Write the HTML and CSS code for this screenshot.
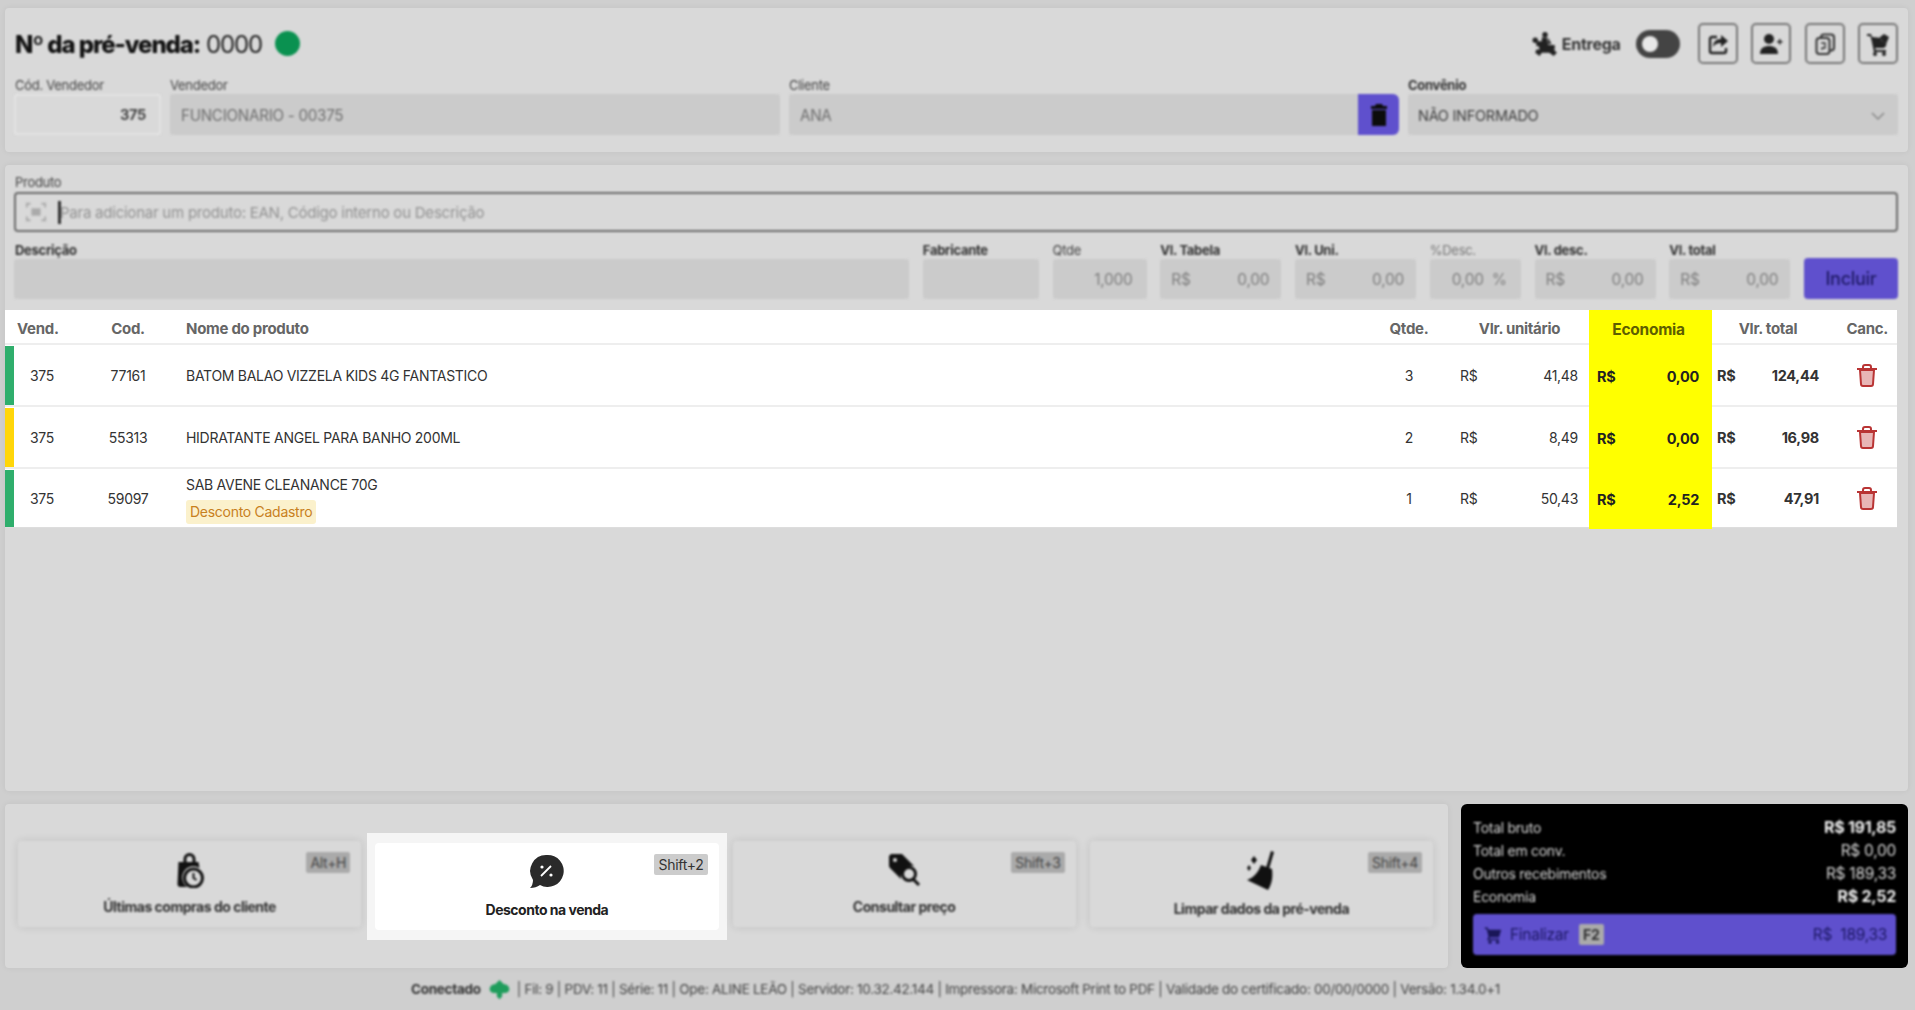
FILE: index.html
```
<!DOCTYPE html>
<html lang="pt-BR">
<head>
<meta charset="utf-8">
<title>Pré-venda</title>
<link rel="stylesheet" href="styles.css">
</head>
<body>
<section class="panel head">
  <div class="soft">
    <div class="toprow">
      <h1 class="title"><b>Nº da pré-venda:</b> 0000</h1>
      <span class="dot"></span>
      <div class="actions">
        <svg class="ico-entrega" viewBox="0 0 24 24"><circle cx="12" cy="3.500" r="2.500"/><circle cx="3" cy="8.500" r="2.500"/><path d="M9 6h5l1 7h6v4H7l-1-4h3zM4 9.500h5V14H4zM15 6l3 6h-3zM4 17h16l3 3-3 3-4-3H9l-2 3-4-3z"/></svg>
        <span class="entrega">Entrega</span>
        <span class="toggle"><i></i></span>
        <button class="iconbtn"><svg viewBox="0 0 24 24"><path d="M11 5H6a2 2 0 0 0-2 2v12a2 2 0 0 0 2 2h12a2 2 0 0 0 2-2v-3" fill="none" stroke="#222" stroke-width="2.400"/><path d="M15 3l7 6-7 6v-4c-4 0-6 1-8 4 0-5 3-8 8-8z"/></svg></button>
        <button class="iconbtn"><svg viewBox="0 0 24 24"><circle cx="10" cy="7" r="5"/><path d="M1 22c0-6 4-8 9-8s9 2 9 8z"/><path d="M18 9h2V7h1.500v2h2v1.500h-2v2H20v-2h-2z"/></svg></button>
        <button class="iconbtn"><svg viewBox="0 0 24 24"><rect x="8" y="2.500" width="13" height="16" rx="3" fill="none" stroke="#333" stroke-width="2"/><rect x="3.500" y="6" width="13" height="16" rx="3" fill="#d9d9d9" stroke="#333" stroke-width="2"/><path d="M8 11h4v5H9v2" fill="none" stroke="#333" stroke-width="1.400"/></svg></button>
        <button class="iconbtn"><svg viewBox="0 0 24 24"><path d="M1 2h4l1 3 10 1-1 2 3 3 3-3-1 6-2 2H9l1 2h10v2H8L5 6 4 4H1z"/><circle cx="9" cy="22" r="2"/><circle cx="18" cy="22" r="2"/><path d="M14 5l4-3 5 3-2 5-4 1z"/></svg></button>
      </div>
    </div>
    <div class="fields-top">
      <label class="field inset"><span>Cód. Vendedor</span><div class="input light right strong">375</div></label>
      <label class="field"><span>Vendedor</span><div class="input dim">FUNCIONARIO - 00375</div></label>
      <label class="field"><span>Cliente</span>
        <div class="joined"><div class="input dim">ANA</div>
          <button class="delbtn"><svg viewBox="0 0 24 24"><path d="M9 1h6l1 2h4v3H4V3h4zM5 7h14v16H5z"/></svg></button></div></label>
      <label class="field"><span class="bold">Convênio</span>
        <div class="input select">NÃO INFORMADO<svg viewBox="0 0 24 24"><path d="M4 8l8 8 8-8" fill="none" stroke="#888" stroke-width="2"/></svg></div></label>
    </div>
  </div>
</section>

<section class="panel prod">
  <div class="soft prodform">
    <div class="field inset"><span>Produto</span>
      <div class="search">
        <svg viewBox="0 0 24 24"><path d="M2 7V3h4M18 3h4v4M22 17v4h-4M6 21H2v-4" fill="none" stroke="#aaa" stroke-width="2"/><rect x="7" y="8" width="10" height="8" fill="#aaa"/></svg>
        <i class="caret"></i><span class="ph">Para adicionar um produto: EAN, Código interno ou Descrição</span>
      </div>
    </div>
    <div class="fields-prod">
      <div class="field inset"><span class="bold">Descrição</span><div class="input dim short"></div></div>
      <div class="field"><span class="bold">Fabricante</span><div class="input dim short"></div></div>
      <div class="field"><span>Qtde</span><div class="input dim short right pale">1,000</div></div>
      <div class="field"><span class="bold">Vl. Tabela</span><div class="input dim short money pale"><em>R$</em><em>0,00</em></div></div>
      <div class="field"><span class="bold">Vl. Uni.</span><div class="input dim short money pale"><em>R$</em><em>0,00</em></div></div>
      <div class="field"><span class="faint">%Desc.</span><div class="input dim short right pale tight">0,00&nbsp;&nbsp;%</div></div>
      <div class="field"><span class="bold">Vl. desc.</span><div class="input dim short money pale"><em>R$</em><em>0,00</em></div></div>
      <div class="field"><span class="bold">Vl. total</span><div class="input dim short money pale"><em>R$</em><em>0,00</em></div></div>
      <button class="incluir">Incluir</button>
    </div>
  </div>

  <div class="table">
    <div class="row thead">
      <div></div><div class="th-vend">Vend.</div><div class="c">Cod.</div><div>Nome do produto</div><div class="c">Qtde.</div>
      <div class="th-unit">Vlr. unitário</div><div class="eco c">Economia</div><div class="th-total">Vlr. total</div><div class="th-canc">Canc.</div>
    </div>
    <div class="row item">
      <div class="bar green"></div><div class="v">375</div><div class="c">77161</div><div>BATOM BALAO VIZZELA KIDS 4G FANTASTICO</div><div class="c">3</div>
      <div class="cur"><span>R$</span><span>41,48</span></div>
      <div class="eco cur-eco"><span>R$</span><span>0,00</span></div>
      <div class="tot"><span>R$</span><span>124,44</span></div>
      <div class="del"><svg viewBox="0 0 20 23"><path d="M3 6h14l-1 14a2 2 0 0 1-2 2H6a2 2 0 0 1-2-2z" fill="#e8b6b6" stroke="#b93434" stroke-width="2"/><path d="M0 5h20M6 5V3a2 2 0 0 1 2-2h4a2 2 0 0 1 2 2v2" fill="none" stroke="#b93434" stroke-width="2"/></svg></div>
    </div>
    <div class="row item">
      <div class="bar yellow"></div><div class="v">375</div><div class="c">55313</div><div>HIDRATANTE ANGEL PARA BANHO 200ML</div><div class="c">2</div>
      <div class="cur"><span>R$</span><span>8,49</span></div>
      <div class="eco cur-eco"><span>R$</span><span>0,00</span></div>
      <div class="tot"><span>R$</span><span>16,98</span></div>
      <div class="del"><svg viewBox="0 0 20 23"><path d="M3 6h14l-1 14a2 2 0 0 1-2 2H6a2 2 0 0 1-2-2z" fill="#e8b6b6" stroke="#b93434" stroke-width="2"/><path d="M0 5h20M6 5V3a2 2 0 0 1 2-2h4a2 2 0 0 1 2 2v2" fill="none" stroke="#b93434" stroke-width="2"/></svg></div>
    </div>
    <div class="row item last">
      <div class="bar green"></div><div class="v">375</div><div class="c">59097</div>
      <div class="namecol"><span>SAB AVENE CLEANANCE 70G</span><span class="tag">Desconto Cadastro</span></div><div class="c">1</div>
      <div class="cur"><span>R$</span><span>50,43</span></div>
      <div class="eco cur-eco"><span>R$</span><span>2,52</span></div>
      <div class="tot"><span>R$</span><span>47,91</span></div>
      <div class="del"><svg viewBox="0 0 20 23"><path d="M3 6h14l-1 14a2 2 0 0 1-2 2H6a2 2 0 0 1-2-2z" fill="#e8b6b6" stroke="#b93434" stroke-width="2"/><path d="M0 5h20M6 5V3a2 2 0 0 1 2-2h4a2 2 0 0 1 2 2v2" fill="none" stroke="#b93434" stroke-width="2"/></svg></div>
    </div>
  </div>
</section>

<div class="bottom">
  <section class="panel shortcuts">
    <div class="card soft">
      <kbd>Alt+H</kbd>
      <svg class="cicon" viewBox="0 0 28 35"><path d="M8 9V6a6 6 0 0 1 12 0v3h-3V6a3 3 0 0 0-6 0v3z"/><path d="M3 9h20l1 6a10 10 0 0 0-12 19H5a3 3 0 0 1-3-3z"/><circle cx="18" cy="25" r="9" fill="none" stroke="#111" stroke-width="3"/><path d="M18 20v5l3 2" fill="none" stroke="#111" stroke-width="2"/></svg>
      <span>Últimas compras do cliente</span>
    </div>
    <div class="spot">
      <div class="card lit">
        <kbd>Shift+2</kbd>
        <svg class="cicon" viewBox="0 0 35 35"><path d="M18 1a16 16 0 1 1-7 30q-4 3-10 3 3-3 3-8A16 16 0 0 1 18 1z" fill="#2a2a2a"/><path d="M12 22l10-10" stroke="#fff" stroke-width="1.800"/><circle cx="13" cy="13" r="1.600" fill="#fff"/><circle cx="22" cy="21" r="1.600" fill="#fff"/></svg>
        <span>Desconto na venda</span>
      </div>
    </div>
    <div class="card soft">
      <kbd>Shift+3</kbd>
      <svg class="cicon" viewBox="0 0 35 35"><path d="M4 1h11l12 12a11 11 0 0 0-13 13L3 15a3 3 0 0 1-1-2V3z"/><circle cx="8" cy="7" r="2" fill="#d9d9d9"/><circle cx="22" cy="21" r="6.500" fill="none" stroke="#111" stroke-width="3"/><path d="M26 26l6 6" stroke="#111" stroke-width="3"/></svg>
      <span>Consultar preço</span>
    </div>
    <div class="card soft tall">
      <kbd>Shift+4</kbd>
      <svg class="cicon" viewBox="0 0 35 41"><path d="M27 1l3 1-5 17-3-1z"/><path d="M17 15l11 4c1 8 0 15-4 21L3 30c6-2 11-7 14-15z"/><path d="M10 6l3 4-3 4-3-4zM5 15l2 3-2 3-2-3z"/></svg>
      <span>Limpar dados da pré-venda</span>
    </div>
  </section>
  <aside class="totals">
    <div class="soft">
      <div class="tline"><span>Total bruto</span><b>R$ 191,85</b></div>
      <div class="tline"><span>Total em conv.</span><i>R$ 0,00</i></div>
      <div class="tline"><span>Outros recebimentos</span><i>R$ 189,33</i></div>
      <div class="tline"><span>Economia</span><b>R$ 2,52</b></div>
      <button class="finalizar">
        <svg viewBox="0 0 24 24"><path d="M1 2h4l1 3h17l-3 10H8L7 17h13v2H4l2-5L3.500 4H1z"/><circle cx="8" cy="21.500" r="2.200"/><circle cx="18" cy="21.500" r="2.200"/></svg>
        <span>Finalizar</span><kbd>F2</kbd><em>R$&nbsp;&nbsp;189,33</em>
      </button>
    </div>
  </aside>
</div>

<footer class="status soft">
  <b>Conectado</b>
  <svg viewBox="0 0 24 24"><path d="M12 1l5 5c4 0 7 3 6 7-1 2-3 3-6 3h-2v4l-3 3-3-3v-4H7c-3 0-5-1-6-3-1-4 2-7 6-7z" fill="#1f9d5c"/></svg>
  <span>| Fil: 9 | PDV: 11 | Série: 11 | Ope: ALINE LEÃO | Servidor: 10.32.42.144 | Impressora: Microsoft Print to PDF | Validade do certificado: 00/00/0000 | Versão: 1.34.0+1</span>
</footer>
</body>
</html>
```
FILE: styles.css
```
* { box-sizing: border-box; }
html, body { margin: 0; height: 1010px; overflow: hidden; }
body {
  display: flex; flex-direction: column; gap: 13px;
  padding: 8px 7px 0 5px;
  background: #cfcfcf;
  font-family: Inter, "Liberation Sans", sans-serif;
  font-size: 14px; color: #333; letter-spacing: -0.02em;
}
button { font: inherit; letter-spacing: inherit; border: 0; padding: 0; }
.soft { filter: blur(1.3px); }
.panel { background: #d9d9d9; border-radius: 4px; box-shadow: 0 0 6px rgba(0,0,0,.06); }

.head { height: 144px; padding: 15px 10px 0 9px; }
.toprow { display: flex; align-items: center; height: 41px; }
.title { margin: 2px 0 0 1px; font-size: 24px; font-weight: 400; color: #222; letter-spacing: -0.045em; }
.title b { font-weight: 800; color: #111; }
.dot { width: 25px; height: 25px; border-radius: 50%; background: #0a9150; margin-left: 13px; }
.actions { margin-left: auto; display: flex; align-items: center; }
.ico-entrega { width: 26px; height: 26px; fill: #222; }
.entrega { margin-left: 4px; font-size: 16px; font-weight: 700; color: #333; }
.toggle { width: 44px; height: 28px; border-radius: 14px; background: #444; margin: 0 18px 0 15px; display: flex; align-items: center; padding-left: 6px; }
.toggle i { width: 16px; height: 16px; border-radius: 50%; background: #e8e8e8; }
.iconbtn { width: 40px; height: 41px; border: 2px solid #777; border-radius: 5px; background: transparent; display: flex; align-items: center; justify-content: center; margin-left: 13.500px; }
.iconbtn:first-of-type { margin-left: 0; }
.iconbtn svg { width: 24px; height: 24px; fill: #222; }

.fields-top { display: grid; grid-template-columns: 147px 610px 610px 1fr; gap: 9px; margin-top: 13px; }
.field { display: flex; flex-direction: column; }
.field > span { font-size: 13px; line-height: 17px; color: #444; height: 17px; }
.field.inset > span { padding-left: 1px; }
.field > span.bold { font-weight: 700; color: #333; }
.field > span.faint { color: #777; }
.input { height: 41px; border-radius: 3px; display: flex; align-items: center; padding: 2px 10px 0; font-size: 14.500px; }
.input.dim { background: #cbcbcb; color: #6e6e6e; font-size: 15.200px; padding-left: 11px; }
.input.light { background: #d9d9d9; border: 2px solid #e3e3e3; color: #444; padding-top: 0; }
.input.right { justify-content: flex-end; }
.input.strong { font-weight: 700; padding-right: 13px; }
.input.short { height: 40px; padding-top: 0; }
.input.pale { color: #7e7e7e; padding: 0 12px 0 11px; font-size: 15.500px; }
.input.right.pale { padding-right: 14px; }
.input.tight { padding-right: 11px; }
.money { justify-content: space-between; }
.money em { font-style: normal; }
.joined { display: flex; }
.joined .input { flex: 1; border-radius: 3px 0 0 3px; }
.delbtn { width: 41px; height: 41px; background: #5f50cd; border-radius: 0 6px 6px 0; display: flex; align-items: center; justify-content: center; }
.delbtn svg { width: 24px; height: 24px; fill: #0c0c0c; }
.select { background: #cbcbcb; color: #3f3f3f; justify-content: space-between; }
.select svg { width: 18px; height: 18px; margin-right: 1px; }

.prod { flex: 1; display: flex; flex-direction: column; }
.prodform { padding: 9px 10px 0 9px; }
.prodform > .field:first-child > span { margin-bottom: 1px; }
.search { height: 40px; border: 2px solid #6c6c6c; border-radius: 4px; display: flex; align-items: center; padding-left: 9px; }
.search svg { width: 22px; height: 22px; }
.caret { width: 3px; height: 23px; background: #333; margin-left: 11px; }
.search .ph { color: #939393; font-size: 15.100px; margin-left: -1px; }
.fields-prod { display: grid; grid-template-columns: 895px 116px 94px 121px 121px 91px 121px 121px 94px; column-gap: 13.750px; margin-top: 10px; align-items: end; }
.incluir { height: 41px; background: #5f50cd; color: #1f1a66; border-radius: 4px; font-size: 18px; font-weight: 500; }

.table { margin: 11px 11px 0 0; background: #fff; font-size: 14px; color: #333; }
.row { display: grid; grid-template-columns: 9px 56px 116px 1194px 58px 151px 123px 118px 67px; align-items: center; }
.thead { height: 35px; padding-top: 4px; font-size: 15px; font-weight: 700; color: #666; border-bottom: 2px solid #eee; }
.item { height: 62px; border-bottom: 2px solid #eee; }
.item.last { height: 59px; border-bottom: 1px solid #ddd; }
.bar { align-self: stretch; margin-top: 1px; }
.green { background: #2fae6c; }
.yellow { background: #ffd60a; }
.c { text-align: center; }
.th-vend { padding-left: 3px; }
.v { text-align: center; }
.eco { align-self: stretch; background: #ff0; display: flex; align-items: center; }
.eco.c { justify-content: center; color: #5e5e00; padding-right: 4px; font-size: 15.500px; }
.thead .eco { margin: -4px 0 -2px; padding-top: 4px; }
.item .eco { margin-bottom: -2px; font-weight: 700; color: #222; font-size: 14.500px; }
.th-unit { text-align: center; padding-left: 12px; }
.th-total { text-align: center; padding-right: 6px; }
.th-canc { text-align: right; padding-right: 9px; }
.cur, .tot, .cur-eco { display: flex; justify-content: space-between; }
.cur { padding: 0 11px 0 22px; }
.cur-eco { justify-content: space-between; padding: 0 13px 0 8px; }
.tot { padding: 0 11px 0 5px; font-weight: 700; font-size: 14.500px; }
.del { display: flex; justify-content: flex-end; padding-right: 20px; }
.del svg { width: 20px; height: 23px; }
.namecol { display: flex; flex-direction: column; align-items: flex-start; gap: 7px; padding-top: 4px; }
.tag { background: #fbf1cc; color: #c8801e; border-radius: 3px; padding: 0 4px; line-height: 24px; height: 24px; }

.bottom { display: flex; gap: 13px; height: 164px; }
.shortcuts { flex: 1; display: grid; grid-template-columns: repeat(4, 1fr); column-gap: 14px; padding: 37px 15px 39px 13px; }
.card { position: relative; background: #d9d9d9; border-radius: 4px; box-shadow: 0 0 8px rgba(0,0,0,.12); display: flex; flex-direction: column; align-items: center; padding-top: 12px; gap: 10px; color: #333; font-weight: 700; font-size: 14px; letter-spacing: -0.035em; }
.card.soft { height: 86px; }
.card.tall { padding-top: 9px; gap: 9px; }
.cicon { height: 35px; width: 35px; fill: #111; }
.tall .cicon { height: 41px; }
.card > span { line-height: 17px; }
kbd { font: inherit; font-size: 14px; font-weight: 400; background: #aaa; color: #444; border-radius: 2px; letter-spacing: -0.02em; }
.card kbd { position: absolute; top: 11px; right: 11px; padding: 0 4px; line-height: 21px; }
.spot { margin: -8px -8px -11px -8px; padding: 10px 8px 8px 8px; background: #f5f5f5; }
.lit { background: #fff; color: #222; height: 87px; box-shadow: none; padding-top: 11px; gap: 12px; }
.lit kbd { background: #ccc; color: #333; }

.totals { width: 447px; background: #000; border-radius: 6px; padding: 12px 12px 0 12px; color: #d5d5d5; font-size: 14px; }
.tline { display: flex; justify-content: space-between; height: 23px; line-height: 23px; }
.tline b { color: #eee; font-size: 16px; }
.tline i { font-style: normal; font-size: 15.500px; }
.finalizar { margin-top: 6px; width: 100%; height: 41px; background: #5f50cd; color: #1d1864; border-radius: 4px; display: flex; align-items: center; padding: 0 9px 0 11px; font-size: 15.500px; }
.finalizar svg { width: 18px; height: 20px; fill: #1a1658; }
.finalizar span { margin-left: 8px; }
.finalizar kbd { margin-left: 10px; width: 25px; line-height: 21px; text-align: center; font-weight: 700; color: #333; }
.finalizar em { margin-left: auto; font-style: normal; }

.status { flex: 0 0 42px; display: flex; justify-content: center; align-items: center; font-size: 13.500px; color: #444; padding: 0 2px 0 0; margin-top: -13px; }
.status b { color: #333; }
.status svg { width: 21px; height: 21px; margin: 0 7px 0 8px; }
```
